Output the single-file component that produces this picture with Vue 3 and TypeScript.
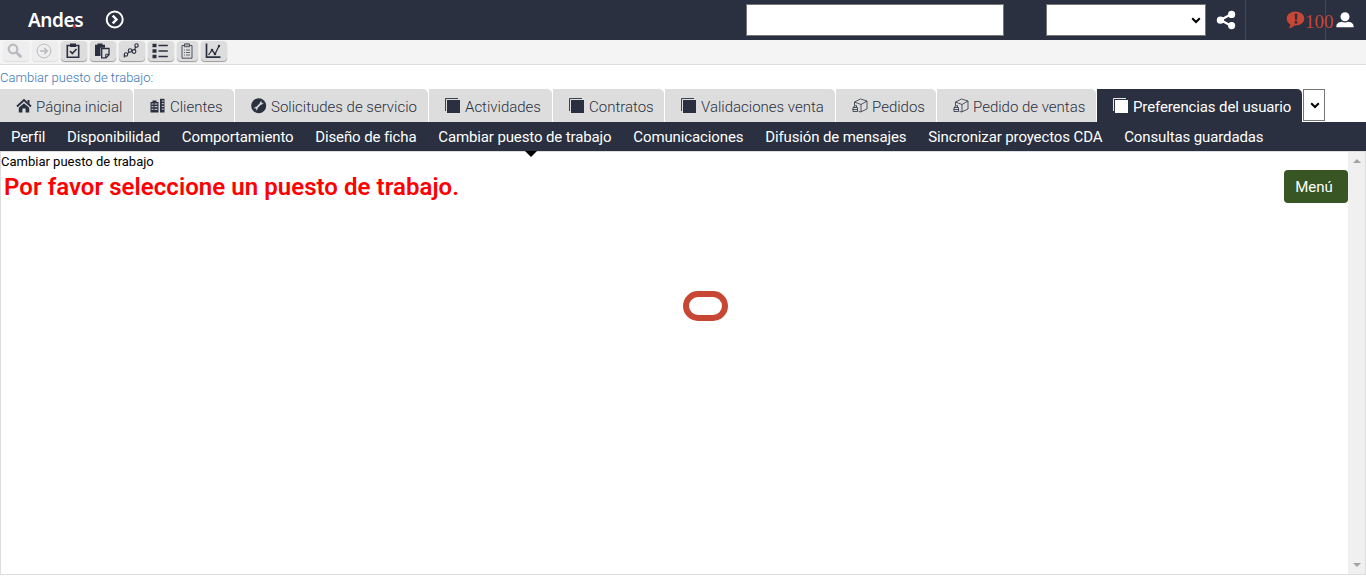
<script setup lang="ts">
type Tab = { label: string; icon: string; width: number }

const tools = ['search', 'arrow', 'check', 'paste', 'route', 'list', 'clipboard', 'chart']

const tabs: Tab[] = [
  { label: 'Página inicial', icon: 'home', width: 133 },
  { label: 'Clientes', icon: 'building', width: 100 },
  { label: 'Solicitudes de servicio', icon: 'wrench', width: 193 },
  { label: 'Actividades', icon: 'stack', width: 123 },
  { label: 'Contratos', icon: 'stack', width: 111 },
  { label: 'Validaciones venta', icon: 'stack', width: 170 },
  { label: 'Pedidos', icon: 'box', width: 100 },
  { label: 'Pedido de ventas', icon: 'box', width: 159 },
  { label: 'Preferencias del usuario', icon: 'stack', width: 205 },
]

const views = [
  'Perfil', 'Disponibilidad', 'Comportamiento', 'Diseño de ficha', 'Cambiar puesto de trabajo',
  'Comunicaciones', 'Difusión de mensajes', 'Sincronizar proyectos CDA', 'Consultas guardadas',
]
const currentView = 4
</script>

<template>
  <div class="app">
    <header class="banner">
      <div class="logo">Andes<i></i></div>
      <svg class="go" width="20" height="20" viewBox="0 0 20 20" fill="none" stroke="#fff">
        <circle cx="9.700" cy="9.500" r="8" stroke-width="2" />
        <path d="M7.700 5.700 11.500 9.500 7.700 13.300" stroke-width="2.400" />
      </svg>
      <input class="search" type="text" />
      <div class="combo">
        <svg width="10" height="7" viewBox="0 0 10 7"><path d="M1.200 1.200 5 5l3.800-3.800" fill="none" stroke="#000" stroke-width="2" /></svg>
      </div>
      <svg class="share" width="20" height="20" viewBox="0 0 20 20" fill="#fff">
        <path d="M15.500 4 4.500 10l11 6" fill="none" stroke="#fff" stroke-width="2.200" />
        <circle cx="15.600" cy="4.400" r="3.600" /><circle cx="4.400" cy="10.200" r="3.600" /><circle cx="15.600" cy="15.600" r="3.600" />
      </svg>
      <div class="alerts">
        <svg width="19" height="18" viewBox="0 0 19 18">
          <path d="M9.500.5c5 0 8.800 3 8.800 7s-3.800 7-8.800 7l-1.200-.1C7 16 5 17 2.500 17c1.200-1 1.800-2 1.800-3.600C2 12.100.7 10 .7 7.500.7 3.500 4.500.5 9.500.5Z" fill="#c74634" />
          <path d="M8.600 2.800h2.800l-.6 6.400H9.200Z" fill="#2a3040" /><circle cx="10" cy="11.400" r="1.400" fill="#2a3040" />
        </svg>
        <span>100</span>
      </div>
      <svg class="user" width="18" height="16" viewBox="0 0 18 16" fill="#fff">
        <circle cx="9" cy="4.700" r="4.500" /><path d="M.4 15.200v-1.200c0-2.500 2.600-4 5.400-4.300 1.800 1 4.600 1 6.400 0 2.800.3 5.400 1.800 5.400 4.300v1.200Z" />
      </svg>
    </header>

    <div class="toolbar">
      <button v-for="(t, i) in tools" :key="t" class="tool" :class="{ off: i < 2, slim: t === 'clipboard' }">
        <svg width="18" height="18" viewBox="0 0 18 18" fill="none" stroke="currentColor">
          <template v-if="t === 'search'"><circle cx="7" cy="7" r="4.300" stroke-width="2.200" /><path d="m10.300 10.300 5 5" stroke-width="2.800" /></template>
          <template v-else-if="t === 'arrow'"><circle cx="9" cy="9" r="6.900" /><path d="M5 9h7M9.200 6l3 3-3 3" stroke-width="1.700" /></template>
          <template v-else-if="t === 'check'"><path d="M3.300 3.500h11.400v11.700H3.300Z" stroke-width="1.600" /><path d="M6 1.500h6v3.500H6Z" fill="currentColor" stroke="none" /><path d="m6 9 2.300 2.500L12.500 7" stroke-width="1.700" /></template>
          <template v-else-if="t === 'paste'"><path d="M2 2.800h2.500V1.500h5v1.300H12v3H7.500V14H2Z" fill="currentColor" stroke="none" /><path d="M8.700 6.500h7.300v6.300l-3 3H8.700Z" stroke-width="1.300" /><path d="M16 12.300h-3.300v3.500" /></template>
          <template v-else-if="t === 'route'"><circle cx="4" cy="12.500" r="1.700" stroke-width="1.100" /><circle cx="8" cy="8.500" r="1.700" stroke-width="1.100" /><circle cx="12" cy="9.500" r="1.900" stroke-width="1.100" /><circle cx="14.500" cy="3.500" r="1.700" stroke-width="1.100" /><path d="M2.300 15.500v-3M5.400 12l1.500-2M13 8V6l1-1" stroke-width="1.100" /></template>
          <template v-else-if="t === 'list'"><path d="M1.500 3.500h4M1.500 9h4M1.500 14.500h4" stroke-width="3.400" /><path d="M7.500 3.500h9.300M7.500 9h9.300M7.500 14.500h9.300" stroke-width="1.700" /></template>
          <template v-else-if="t === 'clipboard'"><path d="M4 3.500h10v12.700H4Z" stroke-width=".8" /><path d="M6.500 1.800h5v3h-5Z" fill="#aaa" stroke-width=".7" /><path d="M6 8h1m1 0h4M6 10.500h1m1 0h4M6 13h1m1 0h4" stroke-width=".7" /></template>
          <template v-else><path d="M2.500 1.500v13.700h14" stroke-width="1.700" /><path d="m4.500 13 3.500-5 3 4 4-8" stroke-width="1.300" /><circle cx="8" cy="8" r="1.300" fill="currentColor" stroke="none" /><circle cx="11" cy="12" r="1.300" fill="currentColor" stroke="none" /><circle cx="15" cy="4" r="1.200" fill="currentColor" stroke="none" /></template>
        </svg>
      </button>
    </div>

    <div class="crumb">Cambiar puesto de trabajo:</div>

    <nav class="tabs">
      <div v-for="(t, i) in tabs" :key="t.label" class="tab" :class="{ active: i === 8 }" :style="{ width: t.width + 'px' }">
        <svg width="16" height="16" viewBox="0 0 16 16" fill="currentColor">
          <template v-if="t.icon === 'home'"><path d="M1 8.500 8 2l7 6.500" fill="none" stroke="currentColor" stroke-width="1.900" /><path d="M2.800 9.800 8 5.300 13.200 9.800v4.700H9.600V10.500H6.400v4H2.800Z" /><path d="M11.500 2h2v4l-2-2Z" /></template>
          <template v-else-if="t.icon === 'building'"><path d="M.5 4h2V2.500h4V4h2v10.500h-8Z" /><path d="M10 .8h4.500v13.700H10Z" /><path d="M1.500 6h2m1 0h3m-6 2.700h2m1 0h3m-6 2.600h2m1 0h3M11.800 3h2m-2 2.700h2m-2 2.700h2m-2 2.700h2" stroke="#ddd" stroke-width="1" /></template>
          <template v-else-if="t.icon === 'wrench'"><circle cx="7.700" cy="7.700" r="7.500" /><path d="m4.700 10.700 6-6" stroke="#ddd" stroke-width="1.700" /><path d="M12.200 4.900a2 2 0 0 1-1.700 1.300L9.200 4.900a2 2 0 0 1 1.300-1.700M3.200 10.500a2 2 0 0 1 1.700-1.300l1.300 1.300a2 2 0 0 1-1.300 1.700" fill="none" stroke="#ddd" stroke-width="1" /></template>
          <template v-else-if="t.icon === 'stack'"><path d="M2 2h13v13H2Z" /><path d="M.5 13V.5H13" fill="none" stroke="currentColor" stroke-width=".9" /></template>
          <template v-else><g fill="none" stroke="currentColor" stroke-width=".8"><path d="M2.500 7.500V4L8.500 1l6.500 2v8l-6.500 3-2-.7M2.500 4 9 6.500 15 3M9 6.500V14" /><path d="M1 9.500h4.500v4H1ZM2 9.500V8l2.500-.5v2M.5 11.500h5.500" /></g></template>
        </svg>
        <span>{{ t.label }}</span>
      </div>
      <div class="more"><svg width="10" height="7" viewBox="0 0 10 7"><path d="M1.200 1.200 5 5l3.800-3.800" fill="none" stroke="#000" stroke-width="2" /></svg></div>
    </nav>

    <nav class="views">
      <div v-for="(v, i) in views" :key="v" class="view" :class="{ current: i === currentView }">{{ v }}</div>
    </nav>

    <main class="content">
      <section class="body">
        <div class="title">Cambiar puesto de trabajo</div>
        <div class="row">
          <h1>Por favor seleccione un puesto de trabajo.</h1>
          <button class="menu">Menú</button>
        </div>
        <div class="spinner"></div>
      </section>
      <aside class="scroll">
        <svg width="8" height="4" viewBox="0 0 8 4"><path d="M4 0 8 4H0Z" fill="#a3a3a3" /></svg>
        <svg width="8" height="4" viewBox="0 0 8 4"><path d="M0 0h8L4 4Z" fill="#a3a3a3" /></svg>
      </aside>
    </main>
  </div>
</template>

<style>
body { margin: 0; background: #fff; overflow: hidden; }
</style>

<style scoped>
* { box-sizing: border-box; }
svg { display: block; flex: none; }
.app { width: 1366px; height: 581px; font-family: Roboto, "Liberation Sans", sans-serif; color: #000; }
.banner { height: 40px; background: #2a3040; display: flex; align-items: center; }
.logo { position: relative; width: 56px; margin-left: 28px; font: 600 19px/40px "Noto Sans", sans-serif; letter-spacing: -.4px; color: #fff; white-space: nowrap; }
.logo i { position: absolute; left: 45px; top: 25px; width: 3px; height: 3px; border-radius: 50%; background: #d8232a; }
.go { margin-left: 21px; }
.search { width: 258px; height: 32px; margin-left: 621px; border: 1px solid #767676; background: #fff; padding: 0; outline: 0; }
.combo { width: 160px; height: 32px; margin-left: 42px; border: 1px solid #767676; background: #fff; display: flex; align-items: center; justify-content: flex-end; padding-right: 4px; }
.share { margin: 0 0 0 10px; }
.alerts { width: 81px; height: 40px; margin-left: 9px; border: solid #424857; border-width: 0 1px; display: flex; align-items: center; padding-left: 40px; color: #c74634; }
.alerts span { font: 19px/40px "Liberation Serif", serif; padding-top: 4px; }
.user { margin-left: 10px; }
.toolbar { height: 25px; background: #f4f4f4; border-bottom: 1px solid #ddd; display: flex; gap: 3px; padding: 1px 0 0 3px; }
.tool { width: 26px; height: 20px; border: 0; border-radius: 4px; padding: 0; background: #ddd; box-shadow: 0 1px 1px #999; color: #2a3040; display: flex; align-items: center; justify-content: center; }
.tool svg { margin-left: -2px; }
.tool.off { background: #eee; color: #b9bbc0; box-shadow: 0 1px 1px #ddd; }
.tool.slim { width: 21px; }
.tool.slim svg { margin-left: -1px; }
.crumb { height: 24px; color: #3a76b4; font-size: 13px; font-weight: 300; line-height: 25px; }
.tabs { height: 33px; display: flex; gap: 1px; }
.tab { flex: none; height: 33px; background: #ddd; border-radius: 0 5px 0 0; display: flex; align-items: center; gap: 4px; padding-left: 16px; font-size: 15px; font-weight: 300; color: #2a3040; white-space: nowrap; }
.tab span { line-height: 33px; padding-top: 3px; }
.tab.active { background: #2a3040; color: #fff; font-weight: 400; letter-spacing: -.12px; }
.more { width: 22px; height: 32px; border: 1px solid #767676; display: flex; align-items: center; justify-content: center; padding-left: 2px; }
.views { height: 29px; background: #2a3040; display: flex; padding-left: 1px; }
.view { position: relative; padding: 0 11.800px 0 10px; font-size: 15px; letter-spacing: -.12px; line-height: 30px; color: #fff; white-space: nowrap; }
.view.current::after { content: ""; position: absolute; z-index: 2; left: calc(50% - 1px); top: 29px; border: solid transparent; border-width: 6px 6px 0; border-top-color: #000; }
.content { height: 424px; border: 1px solid #ddd; display: flex; }
.body { flex: 1; }
.title { height: 18px; font-size: 13px; line-height: 19px; }
.row { display: flex; justify-content: space-between; align-items: flex-start; }
h1 { margin: 0 0 0 3px; color: #f00; font-size: 24px; font-weight: 600; letter-spacing: .05px; line-height: 34px; white-space: nowrap; }
.menu { width: 64px; height: 33px; border: 0; border-radius: 4px; background: #375623; color: #fff; font: 15px Roboto, sans-serif; padding: 0 4px 0 0; }
.spinner { width: 45px; height: 30px; margin: 87px 0 0 682px; border: 6px solid #c74634; border-radius: 15px; }
.scroll { width: 17px; background: #f0f0f0; display: flex; flex-direction: column; justify-content: space-between; align-items: center; padding: 7px 0; }
</style>
